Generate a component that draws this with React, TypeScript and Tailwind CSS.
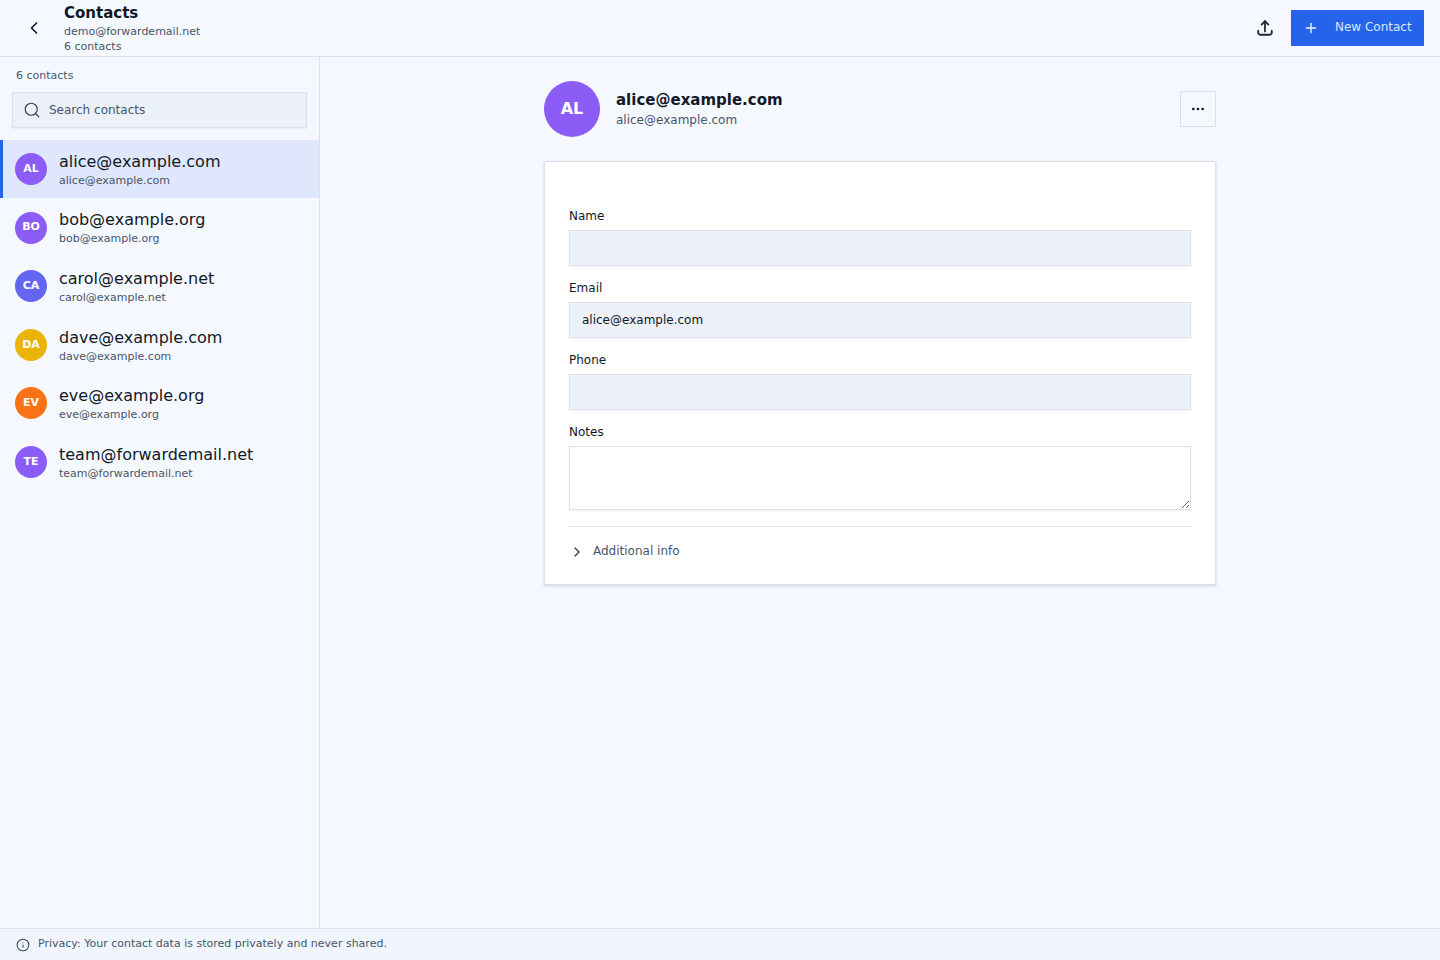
import { ChevronLeft, ChevronRight, Info, MoreHorizontal, Plus, Search } from 'lucide-react'

const contacts = [
  { initials: 'AL', email: 'alice@example.com', color: 'bg-[#8b5cf6]', active: true },
  { initials: 'BO', email: 'bob@example.org', color: 'bg-[#8b5cf6]' },
  { initials: 'CA', email: 'carol@example.net', color: 'bg-[#6366f1]' },
  { initials: 'DA', email: 'dave@example.com', color: 'bg-[#eab308]' },
  { initials: 'EV', email: 'eve@example.org', color: 'bg-[#f97316]' },
  { initials: 'TE', email: 'team@forwardemail.net', color: 'bg-[#8b5cf6]' },
]

function Field({ label, value }: { label: string; value?: string }) {
  return (
    <label className="block mb-[13px]">
      <span className="block text-[12px] leading-[18px] text-[#111827] mb-[5px]">{label}</span>
      <input
        readOnly
        value={value ?? ''}
        className="block w-full h-[36px] px-3 text-[12px] text-[#111827] bg-[#ecf0f8] border border-[#dbe1ec] shadow-[0_1px_2px_rgba(0,0,0,0.05)] outline-none"
      />
    </label>
  )
}

export default function App() {
  return (
    <div className="flex flex-col h-[960px] bg-[#f5f8ff] font-['DejaVu_Sans',sans-serif] text-[#111827] overflow-hidden">
      {/* top bar */}
      <header className="flex items-center h-[57px] shrink-0 border-b border-[#dbe1ec] pl-6 pr-4">
        <ChevronLeft className="w-5 h-5 text-[#111827] shrink-0" strokeWidth={2} />
        <div className="ml-[20px] mt-[1px]">
          <div className="text-[15px] leading-[21px] font-bold">Contacts</div>
          <div className="text-[11px] leading-[15px] text-[#475569]">demo@forwardemail.net</div>
          <div className="text-[11px] leading-[15px] text-[#475569]">6 contacts</div>
        </div>
        <div className="flex items-center ml-auto">
          {/* upload tray */}
          <svg className="w-[18px] h-[18px] text-[#1f2937] mr-[17px]" viewBox="0 0 24 24" fill="none" stroke="currentColor" strokeWidth="2.4" strokeLinecap="round" strokeLinejoin="round">
            <path d="M3 15.5v3A2.5 2.5 0 0 0 5.5 21h13a2.5 2.5 0 0 0 2.5-2.5v-3" />
            <path d="M7.5 7.5 12 3l4.5 4.5" />
            <path d="M12 3v13.5" />
          </svg>
          <button className="flex items-center h-[36px] w-[133px] pl-[12px] bg-[#2563eb] text-[#dbe6ff] text-[12px]">
            <Plus className="w-4 h-4 text-[#eef3ff]" strokeWidth={2} />
            <span className="ml-[16px] -mt-[2px]">New Contact</span>
          </button>
        </div>
      </header>

      <div className="flex flex-1 min-h-0">
        {/* contact list */}
        <aside className="w-[320px] shrink-0 border-r border-[#dbe1ec]">
          <div className="px-4 pt-[11px] text-[11px] leading-[16px] text-[#475569]">6 contacts</div>
          <div className="flex items-center mx-3 mt-[8px] h-[36px] w-[295px] pl-[10px] bg-[#ecf0f8] border border-[#dbe1ec] shadow-[0_1px_2px_rgba(0,0,0,0.05)]">
            <Search className="w-[18px] h-[18px] text-[#374151]" strokeWidth={1.6} />
            <span className="ml-[8px] text-[12px] text-[#475569]">Search contacts</span>
          </div>
          <div className="mt-[11.8px]">
            {contacts.map((c) => (
              <div
                key={c.email}
                className={`flex items-start h-[58.6px] pl-[15px] ${c.active ? 'bg-[#dfe7fc] shadow-[inset_3px_0_0_#2563eb]' : ''}`}
              >
                <div className={`flex items-center justify-center mt-[13.2px] w-8 h-8 rounded-full text-white text-[11px] leading-[14.4px] font-bold ${c.color}`}>
                  {c.initials}
                </div>
                <div className="ml-3 mt-[11px]">
                  <div className="text-[16px] leading-[22px]">{c.email}</div>
                  <div className="text-[11px] leading-[15px] text-[#475569]">{c.email}</div>
                </div>
              </div>
            ))}
          </div>
        </aside>

        {/* detail */}
        <main className="flex-1 min-w-0">
          <div className="w-[672px] mx-auto pt-6">
            <div className="flex items-center h-[56px]">
              <div className="flex items-center justify-center w-14 h-14 rounded-full bg-[#8b5cf6] text-white text-[16px] font-bold">
                AL
              </div>
              <div className="ml-4 flex-1">
                <div className="text-[15px] leading-[22px] font-bold">alice@example.com</div>
                <div className="text-[12px] leading-[18px] text-[#475569]">alice@example.com</div>
              </div>
              <button className="flex items-center justify-center w-9 h-9 border border-[#dbe1ec]">
                <MoreHorizontal className="w-4 h-4 text-[#111827]" strokeWidth={2} />
              </button>
            </div>

            <div className="mt-6 bg-white border border-[#dbe1ec] shadow-[0_1px_3px_rgba(0,0,0,0.14)] px-6 pt-[45px] pb-[22px]">
              <Field label="Name" />
              <Field label="Email" value="alice@example.com" />
              <Field label="Phone" />
              <label className="block">
                <span className="block text-[12px] leading-[18px] text-[#111827] mb-[5px]">Notes</span>
                <textarea readOnly className="block w-full h-[64px] bg-white border border-[#dbe1ec] shadow-[0_1px_2px_rgba(0,0,0,0.05)] outline-none" />
              </label>
              <div className="mt-4 pt-[14px] border-t border-[#dbe1ec] flex items-center h-[36px]">
                <ChevronRight className="w-4 h-4 text-[#374151]" strokeWidth={2} />
                <span className="ml-2 -mt-[1px] text-[12px] text-[#475569]">Additional info</span>
              </div>
            </div>
          </div>
        </main>
      </div>

      {/* privacy note */}
      <footer className="flex items-center h-[32px] shrink-0 border-t border-[#dbe1ec] bg-[#f1f5fd] pl-4">
        <Info className="w-[14px] h-[14px] text-[#374151]" strokeWidth={1.75} />
        <span className="ml-2 text-[11px] text-[#475569]">Privacy: Your contact data is stored privately and never shared.</span>
      </footer>
    </div>
  )
}
